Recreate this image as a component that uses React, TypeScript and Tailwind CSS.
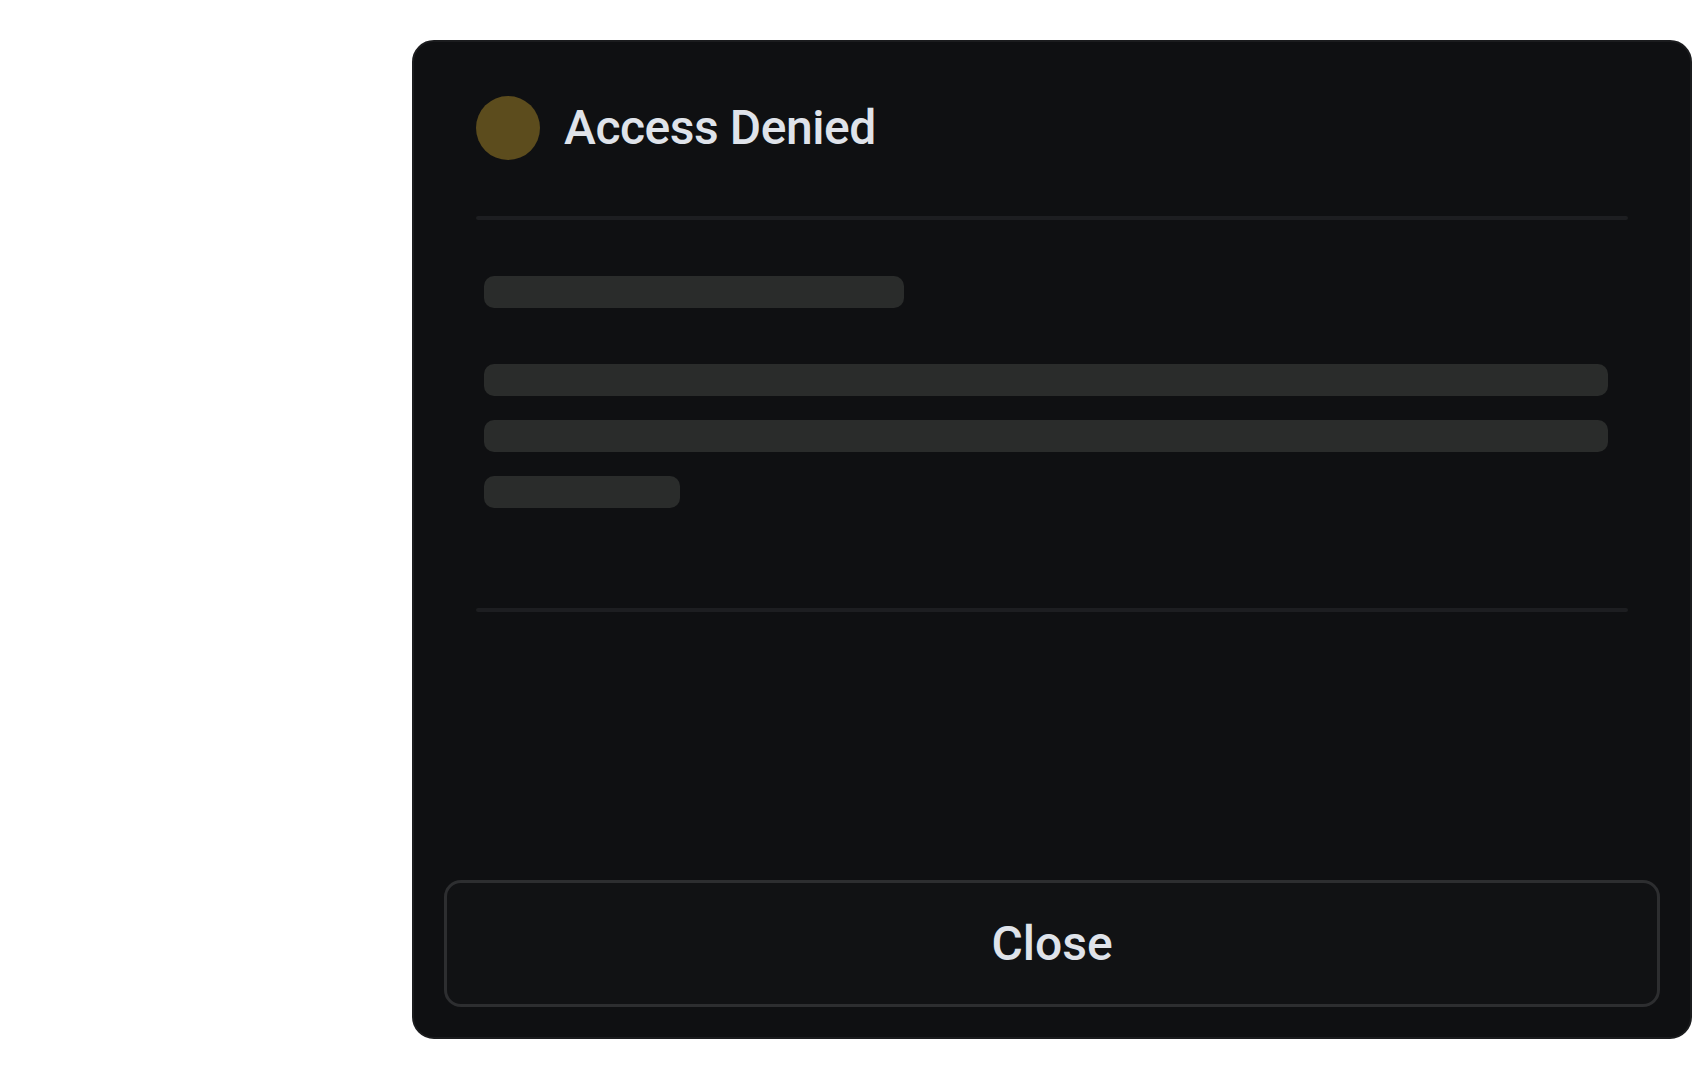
import React from "react";

export default function App() {
  return (
    <div
      className="min-h-[1080px] w-full bg-white flex justify-end pr-1 pt-10"
      style={{ fontFamily: "Roboto, 'Noto Sans', Arial, sans-serif" }}
    >
      <div className="w-[1280px] h-[999px] rounded-[22px] border-2 border-[#1b1c1e] bg-[#0f1012] flex flex-col">
        <div className="px-[62px] pt-[54px] flex flex-col">
          <div className="flex items-center gap-6 h-16">
            <div className="w-16 h-16 rounded-full bg-[#5c4c1d] shrink-0" />
            <h1 className="text-[48px] font-medium text-[#dfe3ea] leading-none tracking-[-0.45px]">
              Access Denied
            </h1>
          </div>
          <div className="mt-[56px] h-1 rounded-full bg-[#1d1e21]" />
          <div className="ml-2 mr-5 flex flex-col">
            <div className="mt-[56px] h-8 w-[420px] rounded-[10px] bg-[#2a2c2b]" />
            <div className="mt-[56px] h-8 rounded-[10px] bg-[#2a2c2b]" />
            <div className="mt-6 h-8 rounded-[10px] bg-[#2a2c2b]" />
            <div className="mt-6 h-8 w-[196px] rounded-[10px] bg-[#2a2c2b]" />
          </div>
          <div className="mt-[100px] h-1 rounded-full bg-[#1d1e21]" />
        </div>
        <div className="flex-1" />
        <div className="px-[30px] pb-[30px]">
          <button className="w-full h-[127px] rounded-[17px] border-[3px] border-[#2d2e30] bg-[#111214] flex items-center justify-center text-[48px] font-medium text-[#dfe3ea] leading-none">
            Close
          </button>
        </div>
      </div>
    </div>
  );
}
